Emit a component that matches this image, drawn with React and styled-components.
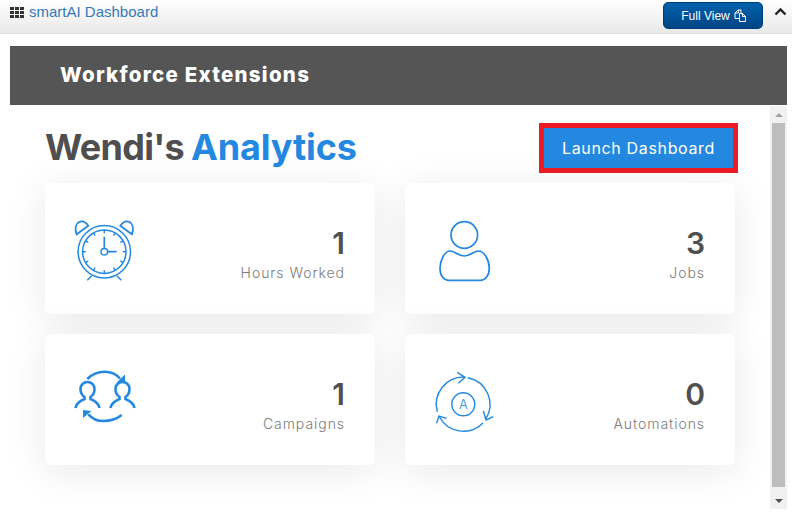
import styled, { createGlobalStyle } from "styled-components";

const GlobalStyle = createGlobalStyle`
  html, body { margin: 0; padding: 0; background: #fff; overflow: hidden; }
  * { box-sizing: border-box; }
`;

const blue = "#2488e0";

const Page = styled.div`
  width: 792px;
  height: 518px;
  overflow: hidden;
  background: #fff;
  font-family: "Inter", "Liberation Sans", sans-serif;
`;

const TopBar = styled.header`
  height: 34px;
  display: flex;
  align-items: flex-start;
  justify-content: space-between;
  padding: 2px 5px 0 10px;
  background: linear-gradient(#ffffff, #e9e9e9);
  border-bottom: 1px solid #dcdcdc;
`;

const Brand = styled.div`
  display: flex;
  align-items: center;
  gap: 5px;
  height: 20px;
  color: #337ab7;
  font: 15px/20px "Liberation Sans", Arial, sans-serif;
`;

const GridIcon = styled.span`
  display: grid;
  grid-template-columns: repeat(3, 4px);
  grid-auto-rows: 3px;
  gap: 1px;
  i { background: #333; }
`;

const BarActions = styled.div`
  display: flex;
  align-items: flex-start;
  gap: 11px;
`;

const FullView = styled.button`
  width: 100px;
  height: 27px;
  display: flex;
  align-items: center;
  justify-content: center;
  gap: 4px;
  padding: 0 0 0 2px;
  color: #fff;
  background: linear-gradient(#0061ab, #004585);
  border: 1px solid #003e78;
  border-radius: 5px;
  font: 12px "Liberation Sans", Arial, sans-serif;
`;

const Collapse = styled.span`
  display: flex;
  margin-top: 5px;
  color: #222;
`;

const Main = styled.main`
  padding: 12px 5px 0 10px;
`;

const Banner = styled.div`
  height: 59px;
  display: flex;
  align-items: center;
  padding: 0 0 2px 50px;
  background: #555;
  color: #fff;
  font: 800 20.5px "Inter", sans-serif;
  letter-spacing: 1.25px;
`;

const Body = styled.div`
  height: 404px;
  display: flex;
`;

const Content = styled.section`
  flex: 1;
  padding: 18px 35px 0 35px;
`;

const Heading = styled.div`
  height: 60px;
  display: flex;
  align-items: flex-start;
  justify-content: space-between;
`;

const Title = styled.h1`
  margin: 0;
  color: #4f4f4f;
  font: 700 36px/48px "Inter", sans-serif;
  letter-spacing: -0.7px;
  word-spacing: -1px;
  span {
    color: ${blue};
    letter-spacing: -0.1px;
  }
`;

const Launch = styled.button`
  width: 199px;
  height: 50px;
  margin-right: -3px;
  background: ${blue};
  border: 5px solid #ed1c24;
  color: #fff;
  font: 400 16px "Inter", sans-serif;
  letter-spacing: 0.65px;
`;

const Cards = styled.div`
  display: grid;
  grid-template-columns: 330px 330px;
  grid-auto-rows: 131px;
  gap: 20px 30px;
`;

const Card = styled.article`
  display: flex;
  align-items: center;
  justify-content: space-between;
  padding: 0 30px;
  background: #fff;
  border-radius: 6px;
  box-shadow: 0 6px 40px rgba(0, 0, 0, 0.09);
`;

const IconBox = styled.div`
  display: flex;
  color: ${blue};
  svg { overflow: visible; }
`;

const Stat = styled.div`
  padding-top: 10px;
  text-align: right;
`;

const Value = styled.div`
  color: #505050;
  font: 600 30px/34px "Inter", sans-serif;
`;

const Label = styled.div`
  margin-top: 4px;
  color: #7b7b7b;
  font: 300 14px/18px "Inter", sans-serif;
  letter-spacing: 0.95px;
`;

const Scrollbar = styled.div`
  width: 17px;
  height: 403px;
  margin-top: 1px;
  display: flex;
  flex-direction: column;
  align-items: center;
  background: #f1f1f1;
`;

const Thumb = styled.div`
  width: 13px;
  height: 364px;
  background: #bdbdbd;
`;

const Arrow = styled.div`
  height: 17px;
  display: flex;
  align-items: center;
  justify-content: center;
  ${(p) => p.$down && "margin-top: auto;"}
  &::before {
    content: "";
    border-left: 4px solid transparent;
    border-right: 4px solid transparent;
    ${(p) => (p.$down ? "border-top: 4px solid #505050;" : "border-bottom: 4px solid #a3a3a3;")}
  }
`;

const ticks = Array.from({ length: 12 }, (_, i) => (i * 30 * Math.PI) / 180);

const ClockIcon = () => (
  <svg width="60" height="65" viewBox="0 0 60 65" fill="none" stroke="currentColor" strokeWidth="1.500">
    <circle cx="29.300" cy="35.700" r="26.200" />
    <circle cx="29.300" cy="35.700" r="21.700" />
    <circle cx="29.300" cy="35.700" r="3.300" />
    <path d="M29.300 32.400V20.700M32.600 35.700h9.100" strokeWidth="1.700" />
    {ticks.map((a) => (
      <line
        key={a}
        x1={29.3 + Math.sin(a) * 21.7}
        y1={35.7 - Math.cos(a) * 21.7}
        x2={29.3 + Math.sin(a) * 18.5}
        y2={35.7 - Math.cos(a) * 18.5}
      />
    ))}
    <path d="M1.700 18.300C-.5 13 .5 8 4 6c3.500-1.500 7 .5 9.300 3.700z" strokeWidth="1.700" />
    <path d="M56.900 18.300C59.100 13 58.100 8 54.600 6c-3.500-1.500-7 .5-9.300 3.700z" strokeWidth="1.700" />
    <path d="M16.700 59.700l-4.400 4.600M41.900 59.700l4.400 4.600" />
  </svg>
);

const PersonIcon = () => (
  <svg width="60" height="65" viewBox="0 0 60 65" fill="none" stroke="currentColor" strokeWidth="1.700">
    <circle cx="29.300" cy="19" r="13.300" />
    <path d="M15 35c5 0 8 5 14.300 5s9.200-5 14.200-5c5.500 0 10.800 9 10.800 17.300 0 7.700-4.300 12-9.300 12H14c-5 0-9-4.300-9-12C5 44 10 35 15 35z" />
  </svg>
);

const TeamIcon = () => (
  <svg width="60" height="65" viewBox="0 0 60 65" fill="none" stroke="currentColor" strokeWidth="2.600">
    <path d="M12.300 12C17 7 23 4.700 30 4.700S41 7 45 11.500" />
    <path d="M50 7.500v8h-8.500z" fill="currentColor" stroke="none" />
    <path d="M46.700 48c-5 4-11 6-18.400 6-6 0-11-2.300-15-6.700" />
    <path d="M8 43v8l8.500-7z" fill="currentColor" stroke="none" />
    <path d="M.5 41c1-5 4-7 9-9v-2c-3-2-4-5-4-8 0-4 3-7 7-7s7 3 7 7c0 3-1 6-4 8v2c5 2 8 4 9 9" />
    <path d="M35.500 41c1-5 4-7 9-9v-2c-3-2-4-5-4-8 0-4 3-7 7-7s7 3 7 7c0 3-1 6-4 8v2c5 2 8 4 9 9" />
  </svg>
);

const AutoIcon = () => (
  <svg width="60" height="65" viewBox="0 0 60 65" fill="none" stroke="currentColor" strokeWidth="1.400">
    <path d="M2.300 44.700A27.300 27.300 0 0 1 30 10.100" />
    <path d="M32.700 10.700A27.300 27.300 0 0 1 50.500 52.500" />
    <path d="M48 56A27.300 27.300 0 0 1 4 49" />
    <path d="M22.300 5.300L30 10.300 23.300 16.300M48.300 44L51 53 58.300 49.700M11.700 51.300L4 49 1.700 56.300" />
    <circle cx="28.300" cy="37.300" r="11.500" />
    <text x="28.300" y="42" textAnchor="middle" fontSize="13" fontFamily="Inter, sans-serif" fontWeight="300" fill="currentColor" stroke="none">
      A
    </text>
  </svg>
);

const stats = [
  { label: "Hours Worked", value: 1, Icon: ClockIcon },
  { label: "Jobs", value: 3, Icon: PersonIcon },
  { label: "Campaigns", value: 1, Icon: TeamIcon },
  { label: "Automations", value: 0, Icon: AutoIcon },
];

const App = () => (
  <Page>
    <GlobalStyle />
    <TopBar>
      <Brand>
        <GridIcon>
          {Array.from({ length: 9 }, (_, i) => (
            <i key={i} />
          ))}
        </GridIcon>
        smartAI Dashboard
      </Brand>
      <BarActions>
        <FullView>
          Full View
          <svg width="13" height="13" viewBox="0 0 13 13" fill="none" stroke="currentColor">
            <path d="M5 9.500H1V4l3-3h3v3" />
            <path d="M4.500 1v3H1" />
            <path d="M5.500 4.500h3l3 3v5h-6zM8.500 4.500v3h3" />
          </svg>
        </FullView>
        <Collapse>
          <svg width="13" height="9" viewBox="0 0 13 9" fill="none" stroke="currentColor" strokeWidth="2.400">
            <path d="M1.500 7.500l5-5 5 5" />
          </svg>
        </Collapse>
      </BarActions>
    </TopBar>
    <Main>
      <Banner>Workforce Extensions</Banner>
      <Body>
        <Content>
          <Heading>
            <Title>
              Wendi's <span>Analytics</span>
            </Title>
            <Launch>Launch Dashboard</Launch>
          </Heading>
          <Cards>
            {stats.map(({ label, value, Icon }) => (
              <Card key={label}>
                <IconBox>
                  <Icon />
                </IconBox>
                <Stat>
                  <Value>{value}</Value>
                  <Label>{label}</Label>
                </Stat>
              </Card>
            ))}
          </Cards>
        </Content>
        <Scrollbar>
          <Arrow />
          <Thumb />
          <Arrow $down />
        </Scrollbar>
      </Body>
    </Main>
  </Page>
);

export default App;
